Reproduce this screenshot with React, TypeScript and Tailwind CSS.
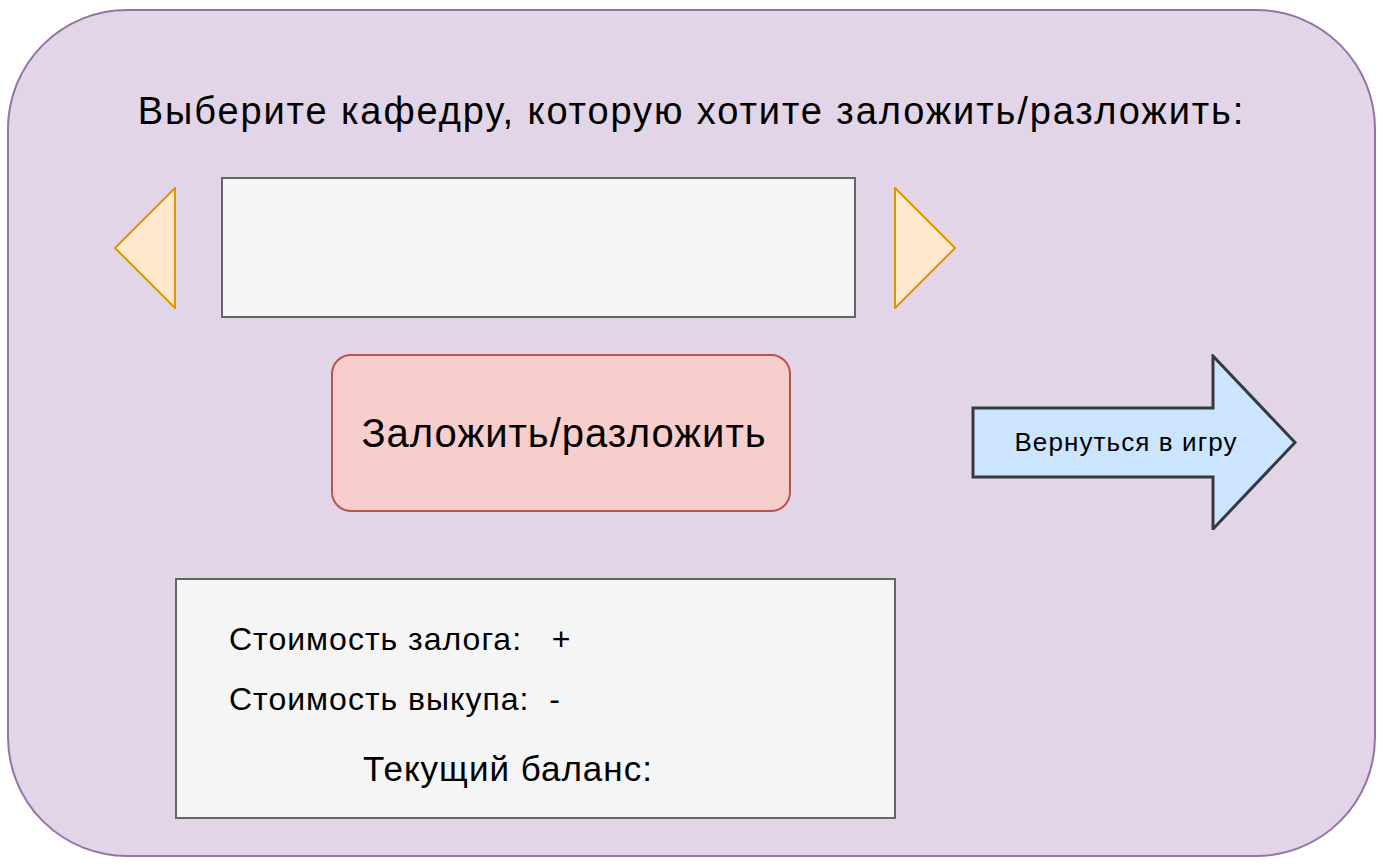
import React from 'react';

function LeftTriangle() {
  return (
    <svg width="62" height="122" viewBox="0 0 62 122" className="shrink-0">
      <polygon points="1,61 61,1 61,121" fill="#ffe6cc" stroke="#d79b00" strokeWidth="2" />
    </svg>
  );
}

function RightTriangle() {
  return (
    <svg width="62" height="122" viewBox="0 0 62 122" className="shrink-0">
      <polygon points="1,1 61,61 1,121" fill="#ffe6cc" stroke="#d79b00" strokeWidth="2" />
    </svg>
  );
}

function BackArrow() {
  return (
    <div className="relative ml-[180px] h-[176px] w-[328px] shrink-0">
      <svg width="328" height="176" viewBox="0 0 328 176">
        <polygon
          points="2,54 242,54 242,2 324,88.5 242,175 242,123 2,123"
          fill="#cce5ff"
          stroke="#36393d"
          strokeWidth="3"
        />
      </svg>
      <div className="absolute left-[2px] top-[54px] flex h-[69px] w-[306px] items-center justify-center text-[26px] tracking-[1.1px] text-black">
        Вернуться в игру
      </div>
    </div>
  );
}

export default function App() {
  return (
    <div
      className="h-[866px] w-[1384px] bg-white pl-[7px] pt-[9px]"
      style={{ fontFamily: '"Liberation Sans", Arial, sans-serif' }}
    >
      <div className="flex h-[848px] w-[1369px] flex-col rounded-[120px] border-2 border-[#9673a6] bg-[#e1d5e7]">
        <h1 className="mt-[81px] text-center text-[38px] leading-[38px] tracking-[1.9px] text-black">
          Выберите кафедру, которую хотите заложить/разложить:
        </h1>

        <div className="mt-[47px] flex h-[141px] items-center">
          <div className="ml-[105px]">
            <LeftTriangle />
          </div>
          <div className="ml-[45px] h-[141px] w-[635px] shrink-0 border-2 border-[#666666] bg-[#f5f5f5]" />
          <div className="ml-[38px]">
            <RightTriangle />
          </div>
        </div>

        <div className="mt-[36px] flex items-start">
          <button className="ml-[322px] flex h-[158px] w-[460px] shrink-0 items-center justify-center rounded-[20px] border-2 border-[#b85450] bg-[#f8cecc] pl-[6px] text-[40px] tracking-[1px] text-black">
            Заложить/разложить
          </button>
          <BackArrow />
        </div>

        <div className="ml-[166px] mt-[48px] flex h-[241px] w-[721px] flex-col border-2 border-[#666666] bg-[#f5f5f5] text-black">
          <div className="ml-[52px] mt-[43px] whitespace-pre text-[32px] leading-[32px] tracking-[1px]">Стоимость залога:   +</div>
          <div className="ml-[52px] mt-[28px] whitespace-pre text-[32px] leading-[32px] tracking-[1px]">Стоимость выкупа:  -</div>
          <div className="ml-[186px] mt-[36px] text-[35px] leading-[35px] tracking-[1px]">Текущий баланс:</div>
        </div>
      </div>
    </div>
  );
}
